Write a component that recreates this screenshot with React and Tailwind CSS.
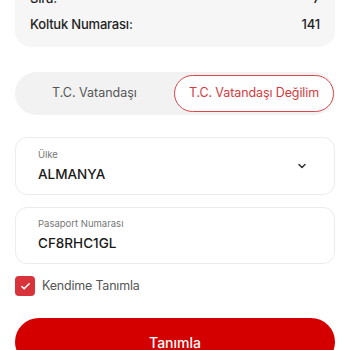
import { Check, ChevronDown } from "lucide-react";

export default function App() {
  return (
    <div className="w-[350px] h-[350px] overflow-hidden bg-white font-['Inter',sans-serif]">
      <div className="flex flex-col px-[15px]">
        {/* seat summary card */}
        <div className="mt-[-26px] flex flex-col gap-[6px] rounded-2xl bg-[#f6f6f6] px-[15px] pt-[15px] pb-[12px]">
          <div className="flex h-[20px] items-center justify-between text-[13px] font-medium tracking-[-0.2px] text-[#1f1f1f]">
            <span>Sıra:</span>
            <span>7</span>
          </div>
          <div className="flex h-[20px] items-center justify-between text-[13px] font-medium tracking-[-0.2px] text-[#1f1f1f]">
            <span>Koltuk Numarası:</span>
            <span>141</span>
          </div>
        </div>

        {/* citizenship toggle */}
        <div className="mt-[25px] flex h-[43px] items-stretch rounded-full bg-[#f2f2f2] py-[3px] pr-[1px]">
          <div className="flex flex-1 items-center justify-center text-[12.5px] text-[#555]">
            T.C. Vatandaşı
          </div>
          <div className="flex w-[160px] items-center justify-center rounded-full border border-[#d9474d] bg-white text-[12.5px] tracking-[-0.1px] text-[#d33a40]">
            T.C. Vatandaşı Değilim
          </div>
        </div>

        {/* country */}
        <div className="mt-[22px] flex h-[58px] items-center justify-between rounded-xl border border-[#ececec] bg-white pl-[22px] pr-[26px]">
          <div className="flex flex-col">
            <span className="text-[9.5px] leading-[12px] text-[#777]">Ülke</span>
            <span className="mt-[4px] text-[13.5px] font-medium leading-[19px] text-[#1a1a1a]">ALMANYA</span>
          </div>
          <ChevronDown size={12} strokeWidth={3} className="text-[#333]" />
        </div>

        {/* passport */}
        <div className="mt-[12px] flex h-[57px] flex-col justify-center rounded-xl border border-[#ececec] bg-white pl-[22px]">
          <span className="text-[9.5px] leading-[12px] text-[#777]">Pasaport Numarası</span>
          <span className="mt-[4px] text-[13.5px] font-medium leading-[19px] text-[#1a1a1a]">CF8RHC1GL</span>
        </div>

        {/* self checkbox */}
        <div className="mt-[12px] flex items-center gap-[7px]">
          <div className="flex h-[20px] w-[20px] items-center justify-center rounded-[4px] bg-[#d8333b]">
            <Check size={11} strokeWidth={3.5} className="text-white" />
          </div>
          <span className="text-[12.5px] tracking-[-0.2px] text-[#555]">Kendime Tanımla</span>
        </div>

        {/* submit */}
        <button className="mt-[22px] flex h-[48px] items-start justify-center rounded-full bg-[#d40000] pt-[14px] text-[14px] font-medium text-white">
          Tanımla
        </button>
      </div>
    </div>
  );
}
